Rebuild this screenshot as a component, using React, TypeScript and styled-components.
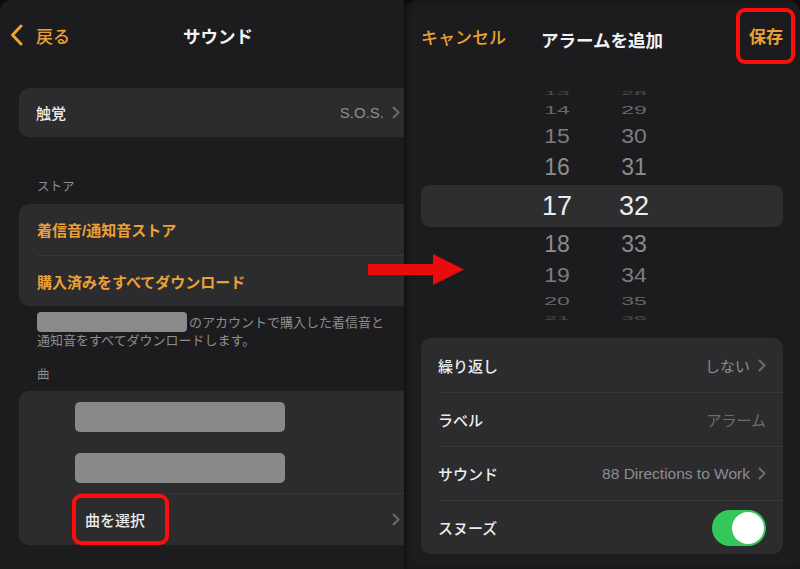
import React from "react";
import styled, { createGlobalStyle } from "styled-components";

const ORANGE = "#eba136";
const GRAY = "#8d8d92";
const CARD = "#2c2c2e";
const BG = "#1c1c1e";
const JP = `"Liberation Sans", "Noto Sans CJK JP", sans-serif`;

const GlobalStyle = createGlobalStyle`
  html, body {
    margin: 0;
    padding: 0;
    background: #0d0d0e;
  }
  body {
    font-family: ${JP};
  }
  * {
    box-sizing: border-box;
  }
`;

type PickerRowData = {
  h: string;
  m: string;
  height: number;
  scale?: number;
  color?: string;
  selected?: boolean;
};

const pickerRows: PickerRowData[] = [
  { h: "13", m: "28", height: 10, scale: 0.25, color: "#4a4a4c" },
  { h: "14", m: "29", height: 24, scale: 0.5, color: "#68686b" },
  { h: "15", m: "30", height: 28, scale: 0.85, color: "#7c7c80" },
  { h: "16", m: "31", height: 35, scale: 1, color: "#8b8b8f" },
  { h: "17", m: "32", height: 42, selected: true },
  { h: "18", m: "33", height: 34, scale: 1, color: "#8b8b8f" },
  { h: "19", m: "34", height: 28, scale: 0.85, color: "#7c7c80" },
  { h: "20", m: "35", height: 24, scale: 0.5, color: "#68686b" },
  { h: "21", m: "36", height: 10, scale: 0.25, color: "#4a4a4c" },
];

const Chevron = ({ color = "#6c6c70" }: { color?: string }) => (
  <svg width="8" height="13" viewBox="0 0 8 13">
    <polyline
      points="1.5,1.5 6.5,6.5 1.5,11.5"
      fill="none"
      stroke={color}
      strokeWidth="2"
      strokeLinecap="round"
      strokeLinejoin="round"
    />
  </svg>
);

const BackChevron = () => (
  <svg width="14" height="22" viewBox="0 0 14 22">
    <polyline
      points="11,2 2.5,11 11,20"
      fill="none"
      stroke={ORANGE}
      strokeWidth="3"
      strokeLinecap="round"
      strokeLinejoin="round"
    />
  </svg>
);

const App = () => {
  return (
    <>
      <GlobalStyle />
      <Page>
        <LeftPanel>
          <LeftScreen>
            <NavBar $height={70}>
              <BackButton>
                <BackChevron />
                戻る
              </BackButton>
              <Title>サウンド</Title>
              <span />
            </NavBar>

            <Card $top={18}>
              <Row $height={49} $indent={17}>
                <RowInner>
                  <Label>触覚</Label>
                  <Value>
                    S.O.S. <Chevron />
                  </Value>
                </RowInner>
              </Row>
            </Card>

            <SectionHeader>ストア</SectionHeader>
            <Card>
              <Row $height={51} $indent={18}>
                <RowInner>
                  <Label $orange>着信音/通知音ストア</Label>
                </RowInner>
              </Row>
              <Row $height={51} $indent={18}>
                <RowInner $divider>
                  <Label $orange>購入済みをすべてダウンロード</Label>
                </RowInner>
              </Row>
            </Card>
            <FooterNote>
              <Redacted />
              のアカウントで購入した着信音と
              <br />
              通知音をすべてダウンロードします。
            </FooterNote>

            <SectionHeader $top={18} $bottom={8}>
              曲
            </SectionHeader>
            <Card>
              <Row $height={51} $indent={56}>
                <SongBar />
              </Row>
              <Row $height={51} $indent={56}>
                <SongBar />
              </Row>
              <Row $height={52} $indent={56}>
                <RowInner $divider>
                  <Highlight $pad="0 20px 0 9px" $shift="0 0 0 -3px">
                    <Label>曲を選択</Label>
                  </Highlight>
                  <Chevron />
                </RowInner>
              </Row>
            </Card>
          </LeftScreen>
        </LeftPanel>

        <RightPanel>
          <NavBar $height={78}>
            <NavAction>キャンセル</NavAction>
            <Title>アラームを追加</Title>
            <SaveSlot>
              <Highlight $pad="14px 8px 10px 9px" $shift="-6px -12px 0 0">
                <NavAction $bold>保存</NavAction>
              </Highlight>
            </SaveSlot>
          </NavBar>

          <Picker>
            {pickerRows.map((r) => (
              <PickerRow key={r.h} $height={r.height} $selected={r.selected}>
                <PickerCell
                  $scale={r.scale ?? 1}
                  $color={r.color ?? "#ececec"}
                  $selected={r.selected}
                >
                  {r.h}
                </PickerCell>
                <PickerCell
                  $scale={r.scale ?? 1}
                  $color={r.color ?? "#ececec"}
                  $selected={r.selected}
                >
                  {r.m}
                </PickerCell>
              </PickerRow>
            ))}
          </Picker>

          <Card $top={15}>
            <Row $height={54} $indent={17}>
              <RowInner>
                <Label>繰り返し</Label>
                <Value>
                  しない <Chevron />
                </Value>
              </RowInner>
            </Row>
            <Row $height={54} $indent={19}>
              <RowInner $divider $shiftText={-2}>
                <Label>ラベル</Label>
                <Value $dim>アラーム</Value>
              </RowInner>
            </Row>
            <Row $height={54} $indent={19}>
              <RowInner $divider $shiftText={-2}>
                <Label>サウンド</Label>
                <Value $size={15.5}>
                  88 Directions to Work <Chevron />
                </Value>
              </RowInner>
            </Row>
            <Row $height={54} $indent={19}>
              <RowInner $divider $shiftText={-2}>
                <Label>スヌーズ</Label>
                <Toggle>
                  <Knob />
                </Toggle>
              </RowInner>
            </Row>
          </Card>
        </RightPanel>

        <Arrow width="96" height="31" viewBox="0 0 96 31">
          <polygon points="0,10 65,10 65,0 96,15.5 65,31 65,21 0,21" fill="#e80c0c" />
        </Arrow>
      </Page>
    </>
  );
};

export default App;

const Page = styled.div`
  position: relative;
  display: flex;
  width: 800px;
  height: 569px;
  overflow: hidden;
`;

const LeftPanel = styled.div`
  flex: none;
  width: 404px;
  height: 569px;
  overflow: hidden;
  background: ${BG};
  border-top-left-radius: 12px;
`;

const LeftScreen = styled.div`
  width: 436px;
  padding: 0 19px;
`;

const RightPanel = styled.div`
  flex: none;
  width: 396px;
  height: 569px;
  overflow: hidden;
  padding: 0 17px;
  background: ${BG};
  border-top-left-radius: 12px;
  border-top-right-radius: 12px;
  box-shadow: inset 3px 0 4px rgba(0, 0, 0, 0.35);
`;

const NavBar = styled.div<{ $height: number }>`
  display: grid;
  grid-template-columns: 1fr auto 1fr;
  align-items: center;
  height: ${(p) => p.$height}px;
`;

const BackButton = styled.div`
  display: flex;
  align-items: center;
  gap: 12px;
  margin-left: -9px;
  color: ${ORANGE};
  font-size: 17px;
  font-weight: 500;
`;

const Title = styled.div`
  color: #f2f2f2;
  font-size: 17.5px;
  font-weight: 700;
`;

const NavAction = styled.div<{ $bold?: boolean }>`
  color: ${ORANGE};
  font-size: 17px;
  line-height: 24px;
  font-weight: ${(p) => (p.$bold ? 700 : 500)};
`;

const SaveSlot = styled.div`
  display: flex;
  justify-content: flex-end;
`;

const Highlight = styled.div<{ $pad: string; $shift: string }>`
  display: flex;
  align-items: center;
  align-self: stretch;
  padding: ${(p) => p.$pad};
  margin: ${(p) => p.$shift};
  border: 4px solid #ff0d0d;
  border-radius: 9px;
`;

const Card = styled.div<{ $top?: number }>`
  margin-top: ${(p) => p.$top ?? 0}px;
  background: ${CARD};
  border-radius: 10px;
  overflow: hidden;
`;

const Row = styled.div<{ $height: number; $indent: number }>`
  display: flex;
  align-items: center;
  height: ${(p) => p.$height}px;
  padding-left: ${(p) => p.$indent}px;
`;

const RowInner = styled.div<{ $divider?: boolean; $shiftText?: number }>`
  flex: 1;
  align-self: stretch;
  display: flex;
  align-items: center;
  justify-content: space-between;
  padding-right: 17px;
  border-top: ${(p) => (p.$divider ? "1px solid #38383a" : "none")};
  & > span:first-child {
    margin-left: ${(p) => p.$shiftText ?? 0}px;
  }
`;

const Label = styled.span<{ $orange?: boolean }>`
  color: ${(p) => (p.$orange ? ORANGE : "#ececec")};
  font-size: 15px;
  font-weight: ${(p) => (p.$orange ? 700 : 500)};
`;

const Value = styled.div<{ $dim?: boolean; $size?: number }>`
  display: flex;
  align-items: center;
  gap: 8px;
  color: ${(p) => (p.$dim ? "#6c6c70" : GRAY)};
  font-size: ${(p) => p.$size ?? 15}px;
`;

const SectionHeader = styled.div<{ $top?: number; $bottom?: number }>`
  padding: ${(p) => p.$top ?? 42}px 0 ${(p) => p.$bottom ?? 9}px 18px;
  color: ${GRAY};
  font-size: 12.5px;
  line-height: 16px;
`;

const FooterNote = styled.div`
  padding: 6px 0 0 18px;
  color: ${GRAY};
  font-size: 13px;
  line-height: 17px;
`;

const Redacted = styled.span`
  display: inline-block;
  width: 150px;
  height: 20px;
  margin-right: 2px;
  vertical-align: -5px;
  background: #8a8a8a;
  border-radius: 4px;
`;

const SongBar = styled.div`
  width: 210px;
  height: 30px;
  background: #898989;
  border-radius: 5px;
`;

const Picker = styled.div`
  margin-top: 10px;
`;

const PickerRow = styled.div<{ $height: number; $selected?: boolean }>`
  display: flex;
  align-items: center;
  gap: 17px;
  height: ${(p) => p.$height}px;
  padding-left: 106px;
  background: ${(p) => (p.$selected ? "#2e2e30" : "transparent")};
  border-radius: 9px;
`;

const PickerCell = styled.div<{ $scale: number; $color: string; $selected?: boolean }>`
  width: 60px;
  text-align: center;
  font-family: "Liberation Sans", sans-serif;
  font-size: ${(p) => (p.$selected ? 27 : 23)}px;
  color: ${(p) => p.$color};
  transform: scaleY(${(p) => p.$scale});
`;

const Toggle = styled.div`
  display: flex;
  justify-content: flex-end;
  align-items: center;
  width: 54px;
  height: 36px;
  padding: 2px;
  border-radius: 18px;
  background: #34c759;
`;

const Knob = styled.div`
  width: 32px;
  height: 32px;
  border-radius: 50%;
  background: #ffffff;
`;

const Arrow = styled.svg`
  position: absolute;
  left: 368px;
  top: 254px;
`;
